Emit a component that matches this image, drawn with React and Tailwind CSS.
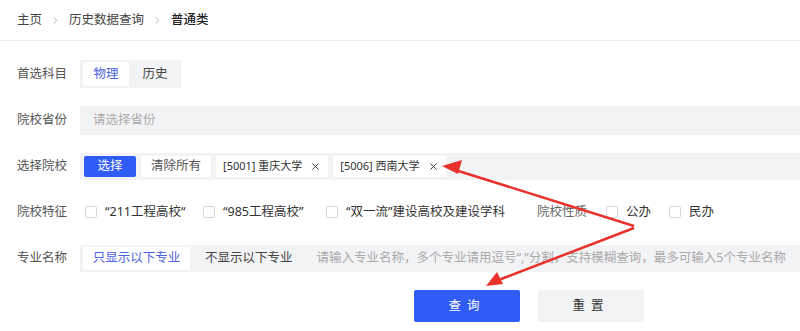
import { ChevronRight, X } from 'lucide-react'

const font = { fontFamily: '"Noto Sans", "Noto Sans CJK SC", sans-serif' }

function Row({ label, children }) {
  return (
    <div className="flex h-[28px] items-center whitespace-nowrap">
      <div className="w-[80px] shrink-0 pl-[17px] text-[12.5px] text-[#555]">{label}</div>
      {children}
    </div>
  )
}

function Box({ label, className = '' }) {
  return (
    <label className={`flex shrink-0 items-center text-[12.5px] text-[#333] ${className}`}>
      <span className="mr-[8px] h-[12px] w-[12px] rounded-[2px] border border-[#d6d8dc] bg-white" />
      {label}
    </label>
  )
}

function Tag({ code, name }) {
  return (
    <span className="flex h-[21px] items-center gap-[8px] bg-white px-[7px] text-[11px] text-[#333]">
      <span>
        [{code}] {name}
      </span>
      <X className="h-[11px] w-[11px]" strokeWidth={2} />
    </span>
  )
}

export default function App() {
  return (
    <div className="relative h-[331px] w-[800px] overflow-hidden bg-white" style={font}>
      {/* breadcrumb */}
      <div className="flex h-[41px] items-center border-b border-[#eceef1] pl-[17px] text-[12.5px]">
        <span className="text-[#444]">主页</span>
        <ChevronRight className="mx-[8px] h-[11px] w-[11px] text-[#aaa]" />
        <span className="text-[#444]">历史数据查询</span>
        <ChevronRight className="mx-[8px] h-[11px] w-[11px] text-[#aaa]" />
        <span className="font-medium text-[#222]">普通类</span>
      </div>

      <div className="flex flex-col gap-[18px] pt-[19px]">
        <Row label="首选科目">
          <div className="flex h-[28px] items-center gap-[3px] bg-[#f2f3f5] px-[3px] text-[12.5px]">
            <span className="flex h-[24px] w-[46px] items-center justify-center bg-white text-[#4c63e0]">物理</span>
            <span className="flex h-[24px] w-[46px] items-center justify-center text-[#444]">历史</span>
          </div>
        </Row>

        <Row label="院校省份">
          <div className="flex h-[29px] flex-1 items-center bg-[#f2f3f5] pl-[13px] text-[12.5px] text-[#aaa]">请选择省份</div>
        </Row>

        <Row label="选择院校">
          <div className="flex h-[27px] flex-1 items-center gap-[5px] bg-[#f2f3f5] px-[4px] text-[12.5px]">
            <span className="flex h-[21px] w-[52px] items-center justify-center rounded-[2px] bg-[#2f5cf4] text-white">选择</span>
            <span className="flex h-[21px] w-[70px] items-center justify-center bg-white text-[#555]">清除所有</span>
            <Tag code="5001" name="重庆大学" />
            <Tag code="5006" name="西南大学" />
          </div>
        </Row>

        <Row label="院校特征">
          <div className="flex items-center pl-[5px]">
            <Box label="“211工程高校“" className="w-[118px]" />
            <Box label="“985工程高校”" className="w-[123px]" />
            <Box label="“双一流”建设高校及建设学科" className="w-[211px]" />
            <span className="w-[69px] shrink-0 text-[12.5px] text-[#666]">院校性质</span>
            <Box label="公办" className="w-[63px]" />
            <Box label="民办" />
          </div>
        </Row>

        <Row label="专业名称">
          <div className="flex h-[27px] flex-1 items-center overflow-hidden bg-[#f2f3f5] pl-[3px] text-[12.5px]">
            <span className="flex h-[23px] w-[107px] shrink-0 items-center justify-center bg-white text-[#4c63e0]">只显示以下专业</span>
            <span className="ml-[15px] text-[#444]">不显示以下专业</span>
            <span className="ml-[24px] text-[#aaa]">请输入专业名称，多个专业请用逗号“,”分割，支持模糊查询，最多可输入5个专业名称</span>
          </div>
        </Row>

        <div className="flex gap-[18px] pl-[414px]">
          <button className="h-[32px] w-[106px] rounded-[2px] bg-[#2f5cf4] text-[12.5px] tracking-[6px] text-white">查询</button>
          <button className="h-[32px] w-[106px] rounded-[2px] bg-[#f2f3f5] text-[12.5px] tracking-[6px] text-[#333]">重置</button>
        </div>
      </div>

      {/* annotation arrows */}
      <svg className="pointer-events-none absolute left-0 top-0" width="800" height="331">
        <path d="M634,226 L452,169" stroke="#e8322b" strokeWidth="2.5" />
        <path d="M634,228 L496,281" stroke="#e8322b" strokeWidth="2.5" />
        <path d="M442,166 L462,160 L458,174 Z" fill="#e8322b" />
        <path d="M486,286 L497,272 L503,284 Z" fill="#e8322b" />
      </svg>
    </div>
  )
}
